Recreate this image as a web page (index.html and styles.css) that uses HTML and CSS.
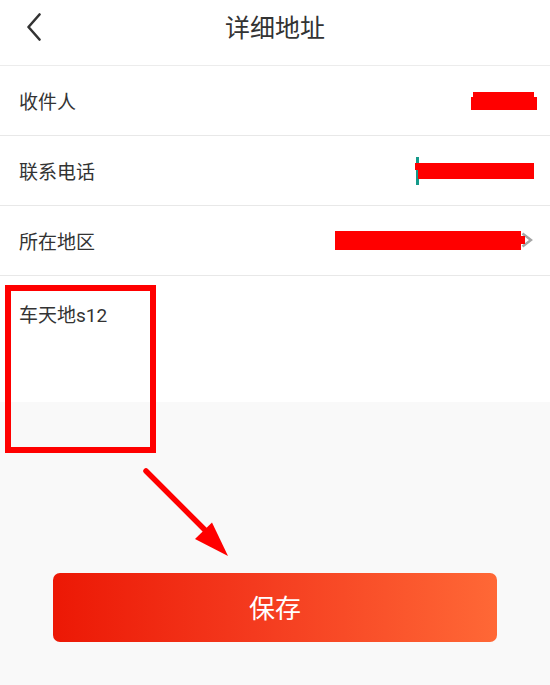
FILE: index.html
```html
<!DOCTYPE html>
<html lang="zh">
<head>
<meta charset="utf-8">
<title>详细地址</title>
<link rel="stylesheet" href="styles.css">
</head>
<body>
<div class="page">
  <header class="topbar">
    <svg class="back" width="16" height="28" viewBox="0 0 16 28"><path d="M13.5 1.5 L2.5 14 L13.5 26.5" fill="none" stroke="#333" stroke-width="2.6" stroke-linecap="round" stroke-linejoin="round"/></svg>
    <h1 class="title">详细地址</h1>
  </header>
  <div class="row">
    <span class="label">收件人</span>
    <span class="redact r1a"></span>
    <span class="redact r1b"></span>
  </div>
  <div class="row">
    <span class="label">联系电话</span>
    <span class="cursor"></span>
    <span class="redact r2a"></span>
    <span class="redact r2b"></span>
  </div>
  <div class="row">
    <span class="label">所在地区</span>
    <svg class="chev" width="12" height="16" viewBox="0 0 12 16"><path d="M1.5 1.5 L10 8 L1.5 14.5" fill="none" stroke="#a6a6a6" stroke-width="2.4"/></svg>
    <span class="redact r3a"></span>
    <span class="redact r3b"></span>
  </div>
  <div class="address">车天地s12</div>
  <div class="actions">
    <button class="save">保存</button>
  </div>
  <div class="mark-box"></div>
  <svg class="mark-arrow" width="550" height="685" viewBox="0 0 550 685">
    <line x1="146" y1="471" x2="206" y2="531" stroke="#ff0000" stroke-width="5.5" stroke-linecap="round"/>
    <polygon points="228,556 195,539 212,522.5" fill="#ff0000"/>
  </svg>
</div>
</body>
</html>
```
FILE: styles.css
```css
* { box-sizing: border-box; }
html, body { margin: 0; padding: 0; }
body {
  background: #f9f9f9;
  font-family: Roboto, "Noto Sans CJK SC", "Noto Sans", sans-serif;
  color: #333;
}
.page {
  position: relative;
  width: 550px;
  height: 685px;
  overflow: hidden;
}
.topbar {
  position: relative;
  height: 66px;
  background: #fff;
  border-bottom: 1px solid #ececec;
  display: flex;
  align-items: center;
  justify-content: center;
}
.back {
  position: absolute;
  left: 26px;
  top: 13px;
}
.title {
  margin: 0;
  font-size: 25px;
  font-weight: 400;
  color: #333;
  line-height: 1;
  padding-bottom: 9px;
}
.row {
  position: relative;
  height: 70px;
  background: #fff;
  border-bottom: 1px solid #e8e8e8;
  display: flex;
  align-items: center;
  padding-left: 19px;
}
.label {
  font-size: 19px;
  line-height: 1;
  color: #333;
  padding-top: 3px;
}
.redact {
  position: absolute;
  background: #ff0000;
}
.r1a { left: 473px; width: 61px; top: 26px; height: 6px; }
.r1b { left: 471px; width: 66px; top: 31px; height: 13px; }
.cursor {
  position: absolute;
  left: 416px;
  top: 21px;
  width: 3px;
  height: 28px;
  background: #159a8a;
}
.r2a { left: 415px; width: 6px; top: 27px; height: 7px; }
.r2b { left: 418px; width: 116px; top: 27px; height: 16px; }
.chev {
  position: absolute;
  left: 521px;
  top: 26px;
}
.r3a { left: 335px; width: 186px; top: 25px; height: 19px; }
.r3b { left: 515px; width: 10px; top: 30px; height: 8px; }
.address {
  height: 126px;
  background: #fff;
  padding: 29px 19px 0;
  font-size: 19px;
  line-height: 1.2;
  color: #333;
}
.actions {
  padding: 171px 53px 0;
}
.save {
  display: block;
  width: 100%;
  height: 69px;
  border: none;
  border-radius: 7px;
  background: linear-gradient(to right, #ec1805, #f43a1e 45%, #ff6836);
  color: #fff;
  font-family: Roboto, "Noto Sans CJK SC", "Noto Sans", sans-serif;
  font-size: 26px;
  padding: 0 0 2px;
}
.mark-box {
  position: absolute;
  left: 5px;
  top: 285px;
  width: 151px;
  height: 168px;
  border: 6px solid #ff0000;
}
.mark-arrow {
  position: absolute;
  left: 0;
  top: 0;
  pointer-events: none;
}
```
